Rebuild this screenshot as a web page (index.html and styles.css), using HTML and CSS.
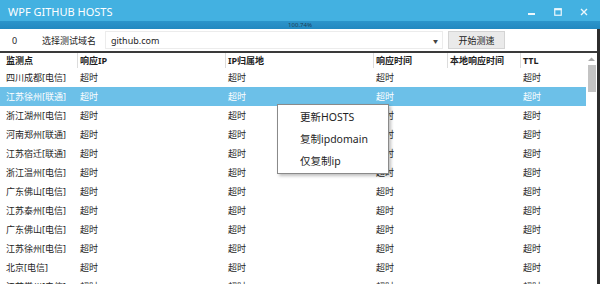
FILE: index.html
```html
<!DOCTYPE html>
<html lang="zh-CN">
<head>
    <meta charset="UTF-8">
    <title>WPF GITHUB HOSTS</title>
    <link rel="stylesheet" href="styles.css">
</head>
<body>
<div class="window">
    <!-- Title bar -->
    <div class="titlebar">
        <span class="title">WPF GITHUB HOSTS</span>
        <div class="win-buttons">
            <svg width="8" height="8" viewBox="0 0 8 8"><rect x="0" y="5" width="7" height="2" fill="#fff"/></svg>
            <svg width="8" height="8" viewBox="0 0 8 8"><rect x="0.75" y="0.75" width="6.5" height="6.5" fill="none" stroke="#fff" stroke-width="1.2"/><rect x="0.5" y="0.5" width="7" height="1.8" fill="#fff"/></svg>
            <svg width="8" height="8" viewBox="0 0 8 8"><path d="M1 1 L7 7 M7 1 L1 7" stroke="#fff" stroke-width="1.4"/></svg>
        </div>
    </div>

    <div class="progress"><span>100.74%</span></div>

    <div class="main">
        <!-- Toolbar -->
        <div class="toolbar">
            <span class="count">0</span>
            <span class="label">选择测试域名</span>
            <div class="combo">
                <span>github.com</span>
                <span class="arrow">▼</span>
            </div>
            <button class="start-btn">开始测速</button>
        </div>

        <!-- Result grid -->
        <div class="grid-wrap">
            <div class="grid" id="grid">
                <div class="row header">
                    <div class="cell">监测点</div>
                    <div class="cell">响应IP</div>
                    <div class="cell">IP归属地</div>
                    <div class="cell">响应时间</div>
                    <div class="cell">本地响应时间</div>
                    <div class="cell">TTL</div>
                </div>
            </div>
            <div class="scrollbar">
                <svg width="9" height="6" viewBox="0 0 9 6"><path d="M1 5 L4.5 1.5 L8 5 Z" fill="#a8a8a8"/></svg>
                <div class="thumb"></div>
            </div>
        </div>
    </div>

    <!-- Context menu -->
    <div class="context-menu">
        <div class="menu-item">更新HOSTS</div>
        <div class="menu-item">复制ipdomain</div>
        <div class="menu-item">仅复制ip</div>
    </div>
</div>

<script>
    const places = [
        '四川成都[电信]', '江苏徐州[联通]', '浙江湖州[电信]', '河南郑州[联通]',
        '江苏宿迁[联通]', '浙江温州[电信]', '广东佛山[电信]', '江苏泰州[电信]',
        '广东佛山[电信]', '江苏徐州[电信]', '北京[电信]', '江苏常州[电信]'
    ];

    const grid = document.getElementById('grid');

    // Build one row per monitoring point
    places.forEach(function (place, i) {
        const row = document.createElement('div');
        row.className = i === 1 ? 'row selected' : 'row';
        const values = [place, '超时', '超时', '超时', '', '超时'];
        values.forEach(function (v) {
            const cell = document.createElement('div');
            cell.className = 'cell';
            cell.textContent = v;
            row.appendChild(cell);
        });
        grid.appendChild(row);
    });
</script>
</body>
</html>
```

FILE: styles.css
```css
html, body {
    margin: 0;
    height: 100%;
    overflow: hidden;
}

body {
    font-family: "Noto Sans", "Noto Sans CJK SC", sans-serif;
    font-size: 9px;
    color: #1e1e1e;
    background: #ffffff;
}

.window {
    position: relative;
    width: 600px;
    height: 284px;
    display: flex;
    flex-direction: column;
}

/* Title bar */
.titlebar {
    height: 21px;
    background: #43b1e1;
    display: flex;
    align-items: center;
    justify-content: space-between;
    padding: 0 12px 0 8px;
}

.title {
    color: #ffffff;
    font-size: 11px;
    padding-top: 1px;
}

.win-buttons {
    display: flex;
    gap: 18px;
    align-items: center;
    padding-top: 2px;
}

.win-buttons svg {
    opacity: 0.9;
}

/* Progress strip */
.progress {
    height: 8px;
    background: linear-gradient(#2c95cb, #2389c0);
    display: flex;
    justify-content: center;
    align-items: center;
}

.progress span {
    font-size: 6px;
    color: #1c3f55;
    line-height: 8px;
}

.main {
    flex: 1;
    display: flex;
    flex-direction: column;
    border-right: 3px solid #2d2d2d;
    min-height: 0;
}

/* Toolbar */
.toolbar {
    height: 22px;
    display: flex;
    align-items: center;
    border-bottom: 2px solid #3a3a3a;
}

.count {
    margin-left: 12px;
    width: 30px;
}

.label {
    width: 63px;
}

.combo {
    width: 327px;
    height: 16px;
    margin-left: 0;
    padding: 0 4px 0 5px;
    border: 1px solid #ececec;
    display: flex;
    justify-content: space-between;
    align-items: center;
}

.combo .arrow {
    font-size: 5px;
    color: #444;
}

.start-btn {
    margin-left: 5px;
    width: 57px;
    height: 18px;
    padding: 0;
    font-family: inherit;
    font-size: 9px;
    color: #222;
    background: #eaeaea;
    border: 1px solid #d4d4d4;
}

/* Grid */
.grid-wrap {
    flex: 1;
    display: flex;
    min-height: 0;
}

.grid {
    width: 586px;
    overflow: hidden;
}

.row {
    display: grid;
    grid-template-columns: 77px 148px 148px 74px 73px 1fr;
    height: 19px;
    align-items: center;
}

.row .cell {
    padding-left: 3px;
    white-space: nowrap;
}

.row .cell:first-child {
    padding-left: 6px;
}

.header {
    height: 15px;
    font-weight: bold;
}

.header .cell {
    border-left: 1px solid #dcdcdc;
    height: 15px;
    line-height: 15px;
    padding-left: 2px;
}

.header .cell:first-child {
    border-left: none;
    padding-left: 6px;
}

.selected {
    background: #6cc0e8;
    color: #ffffff;
}

.scrollbar {
    width: 11px;
    display: flex;
    flex-direction: column;
    align-items: center;
    padding-top: 3px;
    gap: 3px;
}

.thumb {
    width: 8px;
    height: 27px;
    background: #c3c3c3;
}

/* Context menu */
.context-menu {
    position: absolute;
    left: 277px;
    top: 104px;
    width: 110px;
    padding: 1px 0;
    background: #ffffff;
    border: 1px solid #8a8a8a;
    box-shadow: 2px 2px 3px rgba(0, 0, 0, 0.25);
    font-size: 10.5px;
}

.menu-item {
    height: 22px;
    line-height: 22px;
    padding-left: 22px;
}
```
